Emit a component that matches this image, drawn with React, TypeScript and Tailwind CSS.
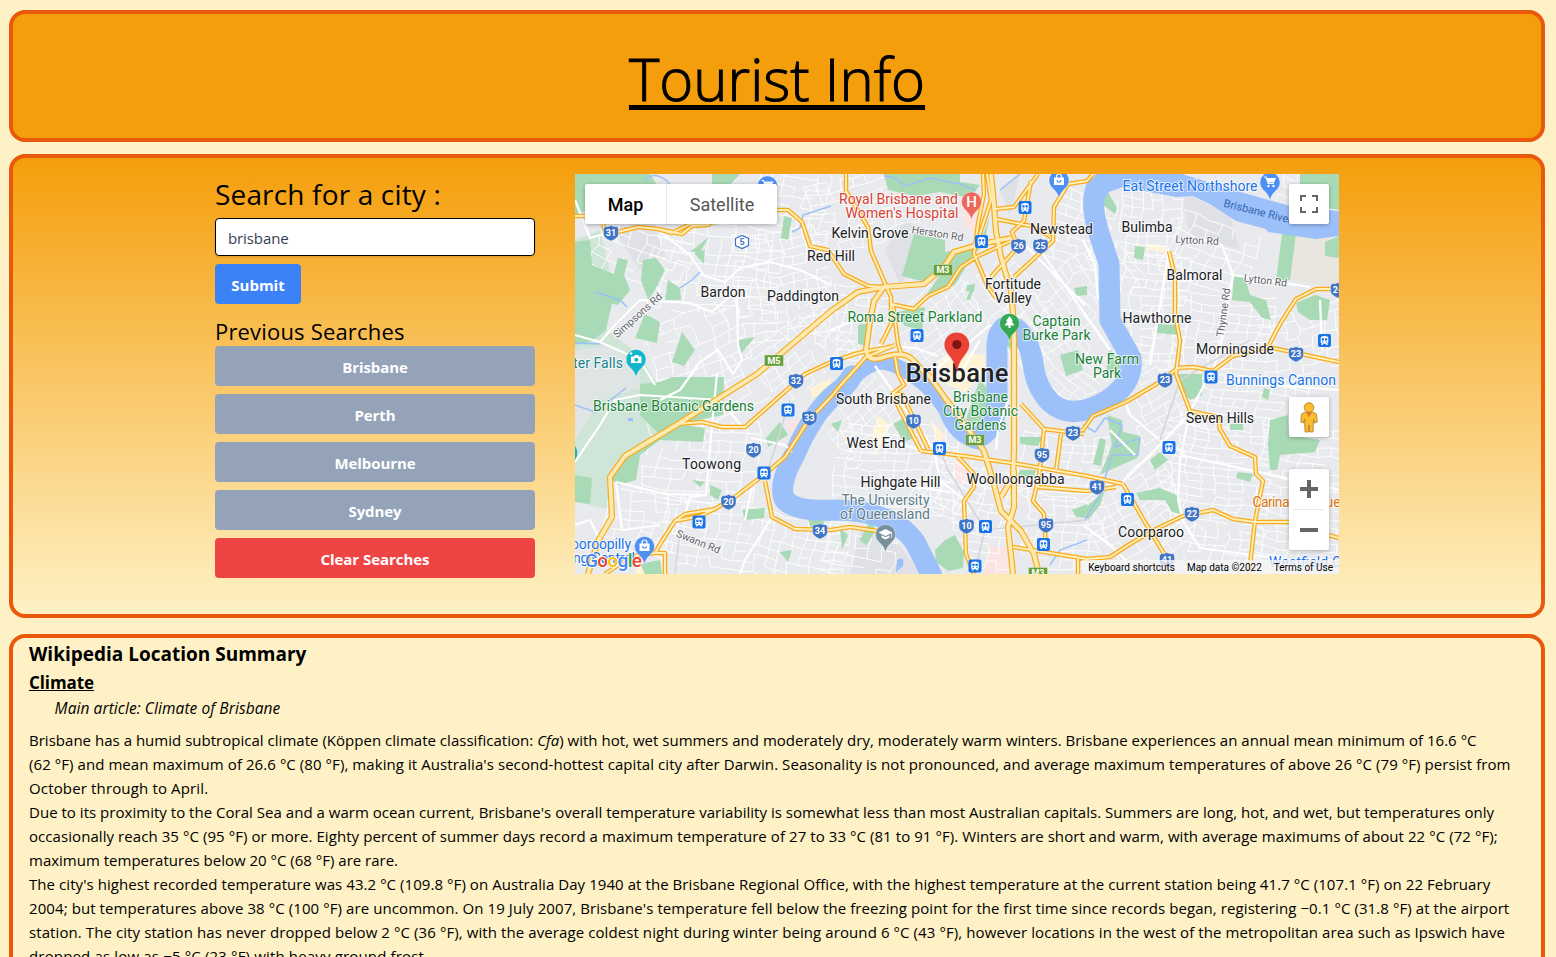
import React from "react";

const ui = "font-['Open_Sans','Noto_Sans',sans-serif]";

/* ---------- street network ---------- */

function streets(cx: number, cy: number, w: number, h: number, angle: number, dx: number, dy: number, seed: number) {
  let s = seed;
  const rnd = () => {
    s = (s * 1103515245 + 12345) % 2147483648;
    return s / 2147483648;
  };
  const nx = Math.ceil(w / dx);
  const ny = Math.ceil(h / dy);
  const a = (angle * Math.PI) / 180;
  const pts: string[][] = [];
  for (let j = 0; j <= ny; j++) {
    const row: string[] = [];
    for (let i = 0; i <= nx; i++) {
      const x = i * dx - w / 2 + (rnd() - 0.5) * dx * 0.3 + Math.sin(j * 0.8) * 2;
      const y = j * dy - h / 2 + (rnd() - 0.5) * dy * 0.3 + Math.sin(i * 0.6) * 2;
      row.push(`${(cx + x * Math.cos(a) - y * Math.sin(a)).toFixed(1)} ${(cy + x * Math.sin(a) + y * Math.cos(a)).toFixed(1)}`);
    }
    pts.push(row);
  }
  let d = "";
  for (let j = 0; j <= ny; j++)
    for (let i = 0; i <= nx; i++) {
      if (i < nx && rnd() > 0.2) d += `M${pts[j][i]}L${pts[j][i + 1]}`;
      if (j < ny && rnd() > 0.3) d += `M${pts[j][i]}L${pts[j + 1][i]}`;
    }
  return d;
}

const minorStreets = [
  streets(640, 255, 90, 50, 20, 15, 10, 4),
  streets(715, 270, 130, 90, 8, 13, 10, 7),
  streets(790, 195, 70, 60, 10, 12, 10, 17),
  streets(780, 280, 90, 100, -6, 12, 9, 21),
  streets(700, 360, 90, 100, -20, 16, 11, 12),
  streets(800, 350, 90, 60, -38, 13, 9, 8),
  streets(700, 460, 110, 80, 5, 14, 10, 5),
  streets(640, 520, 70, 60, 6, 12, 10, 44),
  streets(750, 540, 180, 60, 10, 11, 9, 15),
  streets(860, 210, 100, 70, -12, 12, 10, 16),
  streets(850, 320, 60, 70, 8, 11, 9, 18),
  streets(935, 320, 80, 60, -40, 12, 9, 19),
  streets(1010, 300, 80, 60, 48, 14, 10, 20),
  streets(1070, 300, 60, 150, 52, 15, 9, 6),
  streets(1075, 225, 50, 70, 15, 12, 9, 28),
  streets(1070, 365, 60, 60, 45, 11, 8, 29),
  streets(1150, 220, 60, 60, 4, 10, 9, 31),
  streets(1150, 310, 60, 110, 5, 11, 8, 32),
  streets(1210, 250, 80, 60, 20, 14, 11, 33),
  streets(1220, 330, 90, 70, 6, 12, 9, 34),
  streets(1300, 340, 80, 60, -12, 13, 9, 35),
  streets(1310, 190, 60, 30, 15, 14, 9, 36),
  streets(1155, 400, 60, 60, -30, 12, 9, 37),
  streets(1240, 400, 110, 50, 8, 12, 8, 38),
  streets(1210, 470, 100, 90, 8, 14, 7, 39),
  streets(1300, 470, 80, 90, 10, 13, 9, 40),
  streets(1135, 520, 90, 90, -30, 12, 9, 41),
  streets(1210, 545, 90, 50, 10, 12, 8, 42),
  streets(1295, 550, 90, 50, 8, 12, 8, 43),
  streets(1060, 465, 80, 60, 6, 12, 8, 50),
  streets(1060, 530, 70, 70, 5, 13, 9, 51),
  streets(985, 515, 60, 90, 8, 12, 8, 52),
  streets(890, 470, 110, 90, 4, 12, 9, 53),
  streets(860, 420, 70, 60, -40, 12, 9, 54),
  streets(950, 480, 50, 60, 30, 12, 9, 55),
  streets(855, 550, 60, 50, 10, 14, 10, 56),
].join("");

const collectors = [
  "M575 200L590 238L618 230M660 232L690 255L704 276L725 282L740 268L770 262L800 270L831 285",
  "M737 296L738 345L742 360L733 374L718 350L700 362L680 390L660 400",
  "M600 342L615 325L640 300L690 303L712 312L737 290M600 342L575 335M600 342L640 360L655 385",
  "M575 462L600 425L615 400L640 395L720 400L745 430",
  "M717 374L712 425L706 495L690 497L685 515M616 482L665 494L706 495",
  "M616 482L622 530L660 525M575 525L590 520L600 540",
  "M751 438L785 445L792 452M752 487L745 520M772 517L745 560L740 574",
  "M831 330L850 322L868 315M875 366L902 404L920 430L938 455M888 440L920 450",
  "M1083 240L1095 265L1098 300M1020 240L1085 305M1040 250L1110 350",
  "M1200 238L1222 245L1233 275L1310 287M1233 275L1222 340L1213 371",
  "M1169 251L1150 365M1125 400L1130 415L1160 440L1185 453M1210 374L1190 411L1180 460L1178 500L1182 516",
  "M1120 484L1165 440L1185 418M1180 455L1240 468L1339 490",
  "M1339 390L1260 384L1225 378M1083 525L1110 545L1140 574",
  "M1180 516L1200 548L1290 560M1008 400L998 430L996 450M935 455L940 480L964 500M1110 430L1135 455",
  "M900 485L950 492M930 374L960 350L990 325M960 374L980 340M1320 300L1322 350M878 345L915 348L938 356",
].join("");

const highways = [
  "M575 216H590M603 224L606 234L618 232L638 227L658 229L682 234L692 226L708 225L720 215L777 210H788L802 222L810 246L828 250L844 274L868 286L884 287",
  "M658 229L672 233L690 224L715 222",
  "M678 424L702 422L722 427H745L805 374L831 362L858 353L894 346",
  "M846 174V191L868 227L871 251L884 281L891 297V324L881 344",
  "M893 304L898 344L902 356M866 357L895 345",
  "M891 304L914 309L928 296L948 287L961 267L978 256L1011 241",
  "M983 174L984 194L978 224L974 254L988 287L996 298",
  "M991 277L1018 247L1012 232L1024 221L1031 181",
  "M987 174L991 200L978 240",
  "M996 209L1014 207L1038 174M996 219L1031 226L1051 237",
  "M1093 174L1087 181L1068 184L1054 207L1053 241L1014 277",
  "M1169 251L1175 277V314L1180 341L1176 374L1190 411L1218 417L1220 429L1230 446L1255 457L1256 474L1263 481L1255 521L1249 574",
  "M1339 289H1316L1296 299L1280 324L1268 347L1233 356L1213 371L1193 367L1178 368L1160 382L1126 402L1093 416L1083 430L1064 432",
  "M1268 347L1339 362",
  "M1021 404L1044 429L1084 434M1044 429L1039 477L1033 501L1044 514L1046 547M1061 434L1056 471",
  "M921 451L964 456L1018 464L1087 476L1123 484M1038 487L1087 491L1116 487M1038 477V487",
  "M895 357L898 374L904 385L892 394L921 451M892 394L902 394L928 449",
  "M958 457L974 474V487L964 501L966 554L974 574",
  "M1013 547L1087 559L1110 557L1130 544L1156 529L1183 516L1213 510L1233 519L1255 522H1290L1310 530L1339 538",
  "M1123 484L1146 524L1166 557L1171 574M1078 559V574",
  "M866 357L840 386L831 397L808 421L785 457L765 474L735 497L715 509L685 514L675 521L662 541L655 553L632 556L605 574",
  "M715 509L700 516L675 521M765 481L772 517L795 529L831 530L850 527L878 531M655 553H665V574",
];

const motorways = [
  "M588 574L598 541L612 517L610 477L625 456L678 424L757 374L831 311L858 292L884 287L924 284L944 267L954 252L981 244L1011 238",
  "M884 287L874 301L870 321L866 350Q868 362 881 358Q904 350 913 360L928 376",
  "M991 174L993 194L996 231L1001 257L1011 291L1014 324V451L1013 477L1001 497",
  "M1014 470V507L1008 527L1013 574",
  "M928 374L945 398L958 415L984 451L994 484L1001 511L1021 531L1034 554L1039 574",
];

const parks = [
  "M575 174H650L660 190L640 200L600 206L575 215Z",
  "M575 242L590 240L592 265L614 274L618 258L628 260L624 275L630 290L618 305L575 295Z",
  "M575 295L612 303L606 330L590 342L575 345Z",
  "M643 260L656 258L665 270L655 290L648 300L641 280Z",
  "M668 280L680 288L681 300L665 300Z",
  "M645 314L660 322L657 343L635 338Z",
  "M682 332L695 350L684 366L672 362Z",
  "M784 216L792 218L788 240L781 238Z",
  "M690 252L705 240L709 237L700 252ZM694 253L705 250L704 264Z",
  "M712 174H740L725 190L712 185Z",
  "M738 340L755 337L740 355Z",
  "M640 384L660 382L672 377L724 377L723 415L678 424L705 428L703 442L660 440L640 455L636 480L618 485L610 477L625 456L660 435L640 415Z",
  "M575 475L592 478L590 504L575 502Z",
  "M766 438L780 422L788 435L768 447Z",
  "M692 480L705 482L700 487ZM710 485L722 490L718 500L710 495ZM742 510L765 508L764 518L745 520Z",
  "M808 520L823 518L825 530L812 530Z",
  "M884 174H960L960 182L980 185L970 198L940 192L915 196L888 190Z",
  "M914 234L945 240L945 252L955 250L945 266L925 282L902 276Z",
  "M925 297L955 285L975 252L985 246L955 254L940 275Z",
  "M895 312L925 307L922 330L905 326Z",
  "M858 325L868 323L864 345L858 344Z",
  "M985 230L975 250L983 248L990 215Z",
  "M966 300L972 286L975 285L970 300Z",
  "M1003 333L1018 335L1020 345L1014 352L1006 345Z",
  "M980 380L987 388L986 410L978 426L966 420L974 395Z",
  "M831 424L842 420L838 432Z",
  "M893 424L908 416L914 438L904 442Z",
  "M935 550L945 540L955 535L964 552L963 568L948 571L936 562Z",
  "M1101 195L1108 192L1117 208L1115 214L1102 204Z",
  "M1135 246L1145 247L1143 260L1134 258Z",
  "M1282 234L1296 234L1290 280L1276 281Z",
  "M1300 174H1339V210L1320 207L1300 195Z",
  "M1325 242L1339 236V258L1325 256Z",
  "M1234 275L1245 277L1250 295L1266 300L1271 320L1262 318L1250 302L1232 300Z",
  "M1296 303L1315 295L1330 300L1327 320L1310 320L1298 312Z",
  "M1158 324L1175 325L1180 335L1156 333Z",
  "M1060 355L1078 350L1083 370L1066 376Z",
  "M1110 350L1122 362L1118 374L1106 372Z",
  "M1178 374H1202V395L1190 400L1182 392Z",
  "M1270 420L1288 415L1289 435L1320 440L1315 452L1280 455L1277 470L1270 470L1268 445Z",
  "M1100 438L1093 464L1101 466L1106 440ZM1107 415L1122 420L1123 432L1140 436L1137 458L1110 470L1100 475L1112 445Z",
  "M1160 452L1168 460L1155 470L1150 460Z",
  "M1136 493L1160 488L1178 496L1180 514L1172 512L1165 500L1140 500Z",
  "M1083 510L1105 490L1100 505L1088 520Z",
  "M1238 472L1253 474L1250 482L1236 478Z",
  "M1020 437L1042 437L1038 446L1020 444ZM1020 470L1036 470L1034 478L1018 476Z",
  "M1072 510L1087 504V518L1076 517Z",
  "M1230 424H1243V430H1230ZM1264 388L1270 390L1268 400L1262 397Z",
  "M860 540L870 520L876 530L866 545ZM840 528L848 535L842 550Z",
  "M640 564L660 560L662 574L645 574ZM780 552L792 550L788 562Z",
  "M967 285L975 284L974 292L966 291ZM1074 288L1087 286V295L1076 296Z",
];

const riverEast =
  "M1096 188C1088 212 1102 240 1109 264L1110 320L1131 358Q1134 382 1108 400Q1072 422 1050 402Q1037 388 1034 370Q1030 334 1011 326Q996 326 997 352L997 400Q995 432 976 438";
const riverCentral = "M978 442Q955 436 946 410Q934 392 922 382Q902 366 884 362Q870 362 855 376";
const riverWest = "M852 376Q845 388 835 394Q812 414 795 454Q777 486 785 500Q796 512 835 510Q892 510 915 542L932 576";

/* ---------- map labels ---------- */

type LabelProps = { x: number; y: number; w?: number; c?: string; size?: number; children: string; rot?: number; bold?: boolean };
function Label({ x, y, w, c = "#202124", size = 14, children, rot, bold }: LabelProps) {
  return (
    <text
      x={x}
      y={y}
      textAnchor="middle"
      fontSize={size}
      fontWeight={bold ? 500 : 400}
      fill={c}
      stroke="#fff"
      strokeOpacity={0.75}
      strokeWidth={2}
      strokeLinejoin="round"
      paintOrder="stroke"
      textLength={w}
      transform={rot ? `rotate(${rot} ${x} ${y})` : undefined}
    >
      {children}
    </text>
  );
}

const suburbs: [string, number, number, number][] = [
  ["Kelvin Grove", 870, 238.4, 77],
  ["Red Hill", 831, 261, 48],
  ["Newstead", 1061.5, 234, 63],
  ["Bulimba", 1147, 232, 51],
  ["Balmoral", 1194.5, 280.4, 56],
  ["Hawthorne", 1157, 323, 69],
  ["Morningside", 1235, 354.4, 78],
  ["Bardon", 723, 297, 45],
  ["Paddington", 803, 301.4, 72],
  ["Fortitude", 1013, 289, 56],
  ["Valley", 1013, 303, 37],
  ["South Brisbane", 883.5, 404.4, 95],
  ["West End", 876, 448, 59],
  ["Toowong", 711.5, 469.4, 59],
  ["Highgate Hill", 900.5, 487.4, 80],
  ["Woolloongabba", 1015.5, 484, 98],
  ["Seven Hills", 1220, 423, 68],
  ["Coorparoo", 1151, 537.4, 66],
];

const green = "#188038";
const blue = "#1a73e8";

function Shield({ x, y, n }: { x: number; y: number; n: string }) {
  return (
    <g transform={`translate(${x} ${y})`}>
      <path d="M-6-6.5Q-3.5-5.5 0-7.5Q3.5-5.5 6-6.5L7.5-4V1Q7.5 5 0 8Q-7.5 5-7.5 1V-4Z" fill="#3f74c6" stroke="#fff" strokeWidth=".4" />
      <text y="3.4" textAnchor="middle" fontSize="9" fontWeight="700" fill="#fff">{n}</text>
    </g>
  );
}

function Station({ x, y }: { x: number; y: number }) {
  return (
    <g transform={`translate(${x} ${y})`}>
      <rect x="-6.5" y="-6.5" width="13" height="13" rx="2" fill="#1a73e8" />
      <path d="M-3.8-2.5Q-3.8-4.5 0-4.5T3.8-2.5V1.8Q3.8 3 2.5 3L3.5 4.6H2L1 3.2H-1L-2 4.6H-3.5L-2.5 3Q-3.8 3-3.8 1.8Z" fill="#fff" />
      <path d="M-2.7-2.2H-.5V0H-2.7ZM.5-2.2H2.7V0H.5ZM-2.4 1H-1.2V2H-2.4ZM1.2 1H2.4V2H1.2Z" fill="#1a73e8" />
    </g>
  );
}

function Plate({ x, y, children }: { x: number; y: number; children: string }) {
  return (
    <g transform={`translate(${x} ${y})`}>
      <rect x="-9.5" y="-5.5" width="19" height="11" fill="#689f38" stroke="#fff" strokeOpacity=".5" strokeWidth=".6" />
      <text y="3.3" textAnchor="middle" fontSize="9" fontWeight="700" fill="#fff">{children}</text>
    </g>
  );
}

function Poi({ x, y, c, children }: { x: number; y: number; c: string; children?: React.ReactNode }) {
  return (
    <g transform={`translate(${x} ${y})`}>
      <path d="M0 18.500C-1 13-4 10.500-7.500 7A10 10 0 1 1 7.500 7C4 10.500 1 13 0 18.500Z" fill={c} stroke="#fff" strokeOpacity=".5" strokeWidth=".7" />
      {children}
    </g>
  );
}

const Bag = () => (
  <g>
    <path d="M-5-2.500H5V5H-5Z" fill="#fff" />
    <path d="M-2.500-2V-3.500A2.500 2.500 0 0 1 2.500-3.500V-2" fill="none" stroke="#fff" strokeWidth="1.200" />
    <path d="M-2 0A2 2 0 0 0 2 0" fill="none" stroke="#4d8ff5" strokeWidth="1.100" />
  </g>
);
const Cart = () => (
  <g>
    <path d="M-6-5H-4L-1.800 1.500H4" fill="none" stroke="#fff" strokeWidth="1.200" />
    <path d="M-3.500-4H6L4 .5H-2Z" fill="#fff" />
    <circle cx="-1.500" cy="4" r="1.200" fill="#fff" />
    <circle cx="3.500" cy="4" r="1.200" fill="#fff" />
  </g>
);

const shields: [number, number, string][] = [
  [611, 233, "31"], [796, 381, "32"], [809.5, 418, "33"], [753.5, 450, "20"], [728.5, 502, "20"], [820, 531, "34"],
  [1018.500, 246, "26"], [1040.500, 246, "25"], [913.500, 421, "10"], [1073, 433, "23"], [1042, 455, "95"], [966.500, 526, "10"],
  [1046, 525, "95"], [1165, 380, "23"], [1296, 354, "23"], [1097, 487, "41"], [1192, 514, "22"], [1167, 560, "41"], [1338, 290, "24"],
];
const stations: [number, number][] = [
  [788, 410], [764, 473], [699, 522], [1025, 207.500], [981.500, 241.500], [917, 335.500], [836.500, 363.500], [939.500, 448.500],
  [985.500, 526.500], [1043.500, 544.500], [975, 566], [1324.500, 340.500], [1211, 377], [1169, 447.500], [1127.500, 499.500],
];

function CityMap() {
  return (
    <svg className="block h-[400px] w-[764px] font-['Roboto',sans-serif]" viewBox="575 174 764 400">
      <rect x="575" y="174" width="764" height="400" fill="#e8eaed" />
      <path d="M575 240L600 230L612 280L606 330L640 355L655 380L660 430L625 456L610 477L612 510L590 505L575 500Z" fill="#cfe5d7" />
      <path d="M575 350L610 345L640 370L640 384L660 382L600 400L575 440Z" fill="#dfe4e4" />
      <path d="M620 200L650 215L665 255L640 270L620 240ZM905 220L940 235L900 285L885 250ZM1180 190L1230 215L1240 250L1190 235ZM1000 190L1020 174L1010 215ZM860 530L900 545L920 574H850Z" fill="#dfe1e6" />
      <path d="M960 205L985 205L980 235L965 228ZM954 460L972 468L966 484L954 480ZM990 546L1012 548L1008 574H984ZM786 422L800 420L798 432L790 432Z" fill="#fce4e2" />
      <path d="M938 362L950 352L985 355L985 372L965 392L945 384ZM878 415L890 425L876 455L872 440ZM930 420L945 435L938 445ZM1148 244L1166 246L1165 252L1148 250ZM640 560L660 574H635ZM810 388L831 378L830 390L812 398Z" fill="#fef3d5" />
      <path d={minorStreets} fill="none" stroke="#fff" strokeWidth="1" strokeOpacity=".9" />
      <path d="M1296 234L1339 240V288L1290 280Z" fill="#e9e6e0" />
      <path d={parks.join("")} fill="#a8dab5" />
      <g fill="none" stroke="#9cc0f9" strokeLinejoin="round" strokeLinecap="round">
        <path d={riverEast} strokeWidth="21" />
        <path d={riverCentral} strokeWidth="15" />
        <path d={riverWest} strokeWidth="21" />
      </g>
      <path d="M1087 190L1096 174H1182L1230 189L1290 206L1339 211V236L1316 239L1268 232L1266 229L1236 221L1210 204L1193 196L1176 197L1123 187L1109 192L1101 204L1083 200Z" fill="#9cc0f9" />
      <path d="M645 180Q655 170 668 182L672 190M884 176L895 178L905 186L930 178L960 184L975 190M1000 190L1020 174M595 292L620 300L627 307M575 405L595 412L626 388M575 343L600 344M680 288L692 280L700 272M792 232L800 228L803 215L831 206M1083 425L1095 432L1105 418L1122 425L1115 447L1140 438L1138 455L1112 455L1100 495L1085 520M1050 565L1060 550L1087 540" fill="none" stroke="#9cc0f9" strokeWidth="1.500" />
      <path d="M897 560Q905 555 903 566L896 572ZM628 418H633V421H628Z" fill="#9cc0f9" />
      <path d={collectors} fill="none" stroke="#fff" strokeWidth="2.200" strokeLinejoin="round" />
      <path d="M790 400L765 480M938 445L948 470L985 530L1087 520M985 530L974 574M1160 440L1180 380L1250 340M675 574L680 530" fill="none" stroke="#d3d5da" strokeWidth="1.500" />
      <g fill="none" strokeLinejoin="round">
        <path d={highways.join("")} stroke="#f9ab1f" strokeWidth="4.500" />
        <path d={motorways.join("")} stroke="#f9ab1f" strokeWidth="6.200" />
        <path d={highways.join("")} stroke="#fef0b8" strokeWidth="1.900" />
        <path d={motorways.join("")} stroke="#fdeab0" strokeWidth="3.800" />
      </g>

      {shields.map(([x, y, n], i) => <Shield key={i} x={x} y={y} n={n} />)}
      {stations.map(([x, y], i) => <Station key={i} x={x} y={y} />)}
      <path d="M735.500 238.500L742 235.500L748.500 238.500V245.500L742 248.500L735.500 245.500Z" fill="#fff" stroke="#3f74c6" strokeWidth="1.200" />
      <text x="742" y="245.300" textAnchor="middle" fontSize="9" fontWeight="700" fill="#3f74c6">5</text>
      <Plate x={943} y={270}>M3</Plate>
      <Plate x={774} y={360.500}>M5</Plate>
      <Plate x={975} y={440}>M3</Plate>
      <Plate x={1038} y={573}>M3</Plate>

      {suburbs.map(([t, x, y, w]) => <Label key={t} x={x} y={y} w={w}>{t}</Label>)}
      <Label x={898.500} y={204.400} w={119} c="#d93f35">Royal Brisbane and</Label>
      <Label x={902} y={218.400} w={113} c="#d93f35">Women's Hospital</Label>
      <Label x={915} y={322} w={135} c={green}>Roma Street Parkland</Label>
      <Label x={1056.500} y={326} w={48} c={green}>Captain</Label>
      <Label x={1056.500} y={340} w={68} c={green}>Burke Park</Label>
      <Label x={1107} y={364.400} w={64} c={green}>New Farm</Label>
      <Label x={1107} y={378.400} w={28} c={green}>Park</Label>
      <Label x={980.500} y={402.400} w={55} c={green}>Brisbane</Label>
      <Label x={980.500} y={416.400} w={75} c={green}>City Botanic</Label>
      <Label x={980.500} y={430.400} w={52} c={green}>Gardens</Label>
      <Label x={673.500} y={411.400} w={161} c={green}>Brisbane Botanic Gardens</Label>
      <Label x={598} y={368.400} w={50} c="#12838f">ter Falls</Label>
      <Label x={885.500} y={505.400} w={88} c="#607d8b">The University</Label>
      <Label x={885} y={519.400} w={90} c="#607d8b">of Queensland</Label>
      <Label x={1190} y={191.400} w={135} c={blue}>Eat Street Northshore</Label>
      <Label x={1281} y={385} w={110} c={blue}>Bunnings Cannon</Label>
      <Label x={1271} y={507} w={37} c="#d9760d">Carina</Label>
      <Label x={1333} y={507} c="#d9760d">ue</Label>
      <Label x={1309} y={567} w={80} c={blue}>Westfield Ca</Label>
      <Label x={601} y={549.400} w={60} c={blue}>ooroopilly</Label>
      <Label x={604} y={563.400} w={62} c={blue}>ng Central</Label>
      <Label x={937} y={237} size={10.500} c="#5f6368" rot={9}>Herston Rd</Label>
      <Label x={1197} y={244} size={10.500} c="#5f6368" rot={3}>Lytton Rd</Label>
      <Label x={1265} y={284} size={10.500} c="#5f6368" rot={7}>Lytton Rd</Label>
      <Label x={1227} y={313} size={10.500} c="#5f6368" rot={-82}>Thynne Rd</Label>
      <Label x={640} y={318} size={10.500} c="#5f6368" rot={-42}>Simpsons Rd</Label>
      <Label x={697} y={545} size={10.500} c="#5f6368" rot={22}>Swann Rd</Label>
      <text x="1257" y="215" textAnchor="middle" fontSize="11" fill="#3367b5" transform="rotate(14 1257 215)">Brisbane River</text>

      <Poi x={971.500} y={201.500} c="#ee675c">
        <text y="5" textAnchor="middle" fontSize="15" fontWeight="500" fill="#fff">H</text>
      </Poi>
      <Poi x={1009.500} y={323} c="#34a853">
        <path d="M0-7L3.500-2H2L5 2.500H1V5H-1V2.500H-5L-2-2H-3.500Z" fill="#fff" />
      </Poi>
      <Poi x={636} y={359} c="#12b5cb">
        <path d="M-5-2.500H-2L-1-4H2L3-2.500H5.500V4H-5Z" fill="#fff" />
        <circle cx=".3" cy=".8" r="2" fill="#12b5cb" />
        <path d="M-5-7V-4M-6.500-5.500H-3.500" stroke="#fff" />
      </Poi>
      <path d="M575 446Q578 450 577 456L575 460Z" fill="#12b5cb" />
      <Poi x={644.500} y={546} c="#4d8ff5"><Bag /></Poi>
      <Poi x={1059} y={180} c="#4d8ff5"><Bag /></Poi>
      <Poi x={1270} y={182} c="#4d8ff5"><Cart /></Poi>
      <Poi x={767.500} y={185.500} c="#4d8ff5"><Cart /></Poi>
      <Poi x={885.500} y={534} c="#78909c">
        <path d="M-7-1.500L0-5L7-1.500L0 2ZM-4 1.200L0 3.200L4 1.200V3.500L0 5.500L-4 3.500ZM5.800-1V4H6.600V-1Z" fill="#fff" />
      </Poi>

      <Label x={957} y={382.400} w={103} size={25.500} bold>Brisbane</Label>
      <path d="M956.800 373.500C955.500 362 951 358.500 947 352.500A12.400 12.400 0 1 1 966.600 352.500C962.600 358.500 958.100 362 956.800 373.500Z" fill="#ea4335" />
      <circle cx="956.800" cy="344.500" r="4.600" fill="#7f1310" />

      <text x="585" y="567" fontSize="19" textLength="57" fontWeight="500" stroke="#fff" strokeWidth="1.500" paintOrder="stroke" strokeLinejoin="round">
        <tspan fill="#4285f4">G</tspan><tspan fill="#ea4335">o</tspan><tspan fill="#fbbc04">o</tspan><tspan fill="#4285f4">g</tspan><tspan fill="#34a853">l</tspan><tspan fill="#ea4335">e</tspan>
      </text>
    </svg>
  );
}

function MapPanel() {
  const control = "absolute right-[10px] flex w-10 flex-col items-center justify-center rounded-[2px] bg-white shadow-[0_1px_4px_rgba(0,0,0,0.3)]";
  return (
    <div className="relative h-[400px] w-[764px] overflow-hidden font-['Roboto',sans-serif]">
      <CityMap />
      <div className="absolute left-[10px] top-[10px] flex h-10 rounded-[2px] bg-white text-[18px] leading-10 shadow-[0_1px_4px_rgba(0,0,0,0.3)]">
        <button className="w-[82px] border-r border-gray-200 pt-px font-medium leading-[39px] text-black">Map</button>
        <button className="w-[110px] pt-px leading-[39px] text-[#565656]">Satellite</button>
      </div>
      <button className={`${control} top-[10px] h-10`}>
        <svg className="size-[18px]" viewBox="0 0 18 18" fill="#666">
          <path d="M0 0V6H2V2H6V0ZM16 0H12V2H16V6H18V0ZM16 16H12V18H18V12H16ZM2 12H0V18H6V16H2Z" />
        </svg>
      </button>
      <button className={`${control} top-[223px] h-10`}>
        <svg className="h-[31px] w-[18px]" viewBox="0 0 18 31">
          <path d="M5 10L1.500 12L.8 20L3.500 21L4.500 17L5 30H8.300L9 23L9.700 30H13L13.500 17L14.500 21L17.200 20L16.500 12L13 10Z" fill="#fbbc2f" stroke="#a8782a" strokeWidth=".8" />
          <path d="M6 10.500H12L9 15Z" fill="#e37433" />
          <circle cx="9" cy="5.500" r="4.800" fill="#fbbc2f" stroke="#a8782a" strokeWidth=".8" />
        </svg>
      </button>
      <div className={`${control} top-[295px] h-[81px]`}>
        <button className="flex h-10 items-center">
          <svg className="size-[18px]" viewBox="0 0 18 18" fill="#666"><path d="M7 0H11V7H18V11H11V18H7V11H0V7H7Z" /></svg>
        </button>
        <div className="h-px w-[30px] bg-[#e6e6e6]" />
        <button className="flex h-10 items-center">
          <svg className="size-[18px]" viewBox="0 0 18 18" fill="#666"><path d="M0 7H18V11H0Z" /></svg>
        </button>
      </div>
      <div className="absolute bottom-0 right-0 flex h-[14px] gap-3 bg-[#f5f5f5]/80 px-[6px] text-[10px] leading-[15px] text-black">
        <span>Keyboard shortcuts</span>
        <span>Map data ©2022</span>
        <span>Terms of Use</span>
      </div>
    </div>
  );
}

/* ---------- page ---------- */

const cities = ["Brisbane", "Perth", "Melbourne", "Sydney"];

const article: { text: React.ReactNode; tracking: string }[] = [
  { text: <>Brisbane has a humid subtropical climate (Köppen climate classification: <i>Cfa</i>) with hot, wet summers and moderately dry, moderately warm winters. Brisbane experiences an annual mean minimum of 16.6 °C</>, tracking: "tracking-[0.02px]" },
  { text: "(62 °F) and mean maximum of 26.6 °C (80 °F), making it Australia's second-hottest capital city after Darwin. Seasonality is not pronounced, and average maximum temperatures of above 26 °C (79 °F) persist from", tracking: "tracking-[0.07px]" },
  { text: "October through to April.", tracking: "tracking-[0.15px]" },
  { text: "Due to its proximity to the Coral Sea and a warm ocean current, Brisbane's overall temperature variability is somewhat less than most Australian capitals. Summers are long, hot, and wet, but temperatures only", tracking: "tracking-[0.025px]" },
  { text: "occasionally reach 35 °C (95 °F) or more. Eighty percent of summer days record a maximum temperature of 27 to 33 °C (81 to 91 °F). Winters are short and warm, with average maximums of about 22 °C (72 °F);", tracking: "tracking-[0.07px]" },
  { text: "maximum temperatures below 20 °C (68 °F) are rare.", tracking: "tracking-normal" },
  { text: "The city's highest recorded temperature was 43.2 °C (109.8 °F) on Australia Day 1940 at the Brisbane Regional Office, with the highest temperature at the current station being 41.7 °C (107.1 °F) on 22 February", tracking: "tracking-[0.065px]" },
  { text: "2004; but temperatures above 38 °C (100 °F) are uncommon. On 19 July 2007, Brisbane's temperature fell below the freezing point for the first time since records began, registering −0.1 °C (31.8 °F) at the airport", tracking: "tracking-[0.085px]" },
  { text: "station. The city station has never dropped below 2 °C (36 °F), with the average coldest night during winter being around 6 °C (43 °F), however locations in the west of the metropolitan area such as Ipswich have", tracking: "tracking-[0.09px]" },
  { text: "dropped as low as −5 °C (23 °F) with heavy ground frost.", tracking: "tracking-[0.16px]" },
];

export default function App() {
  return (
    <div className={`flex h-[957px] flex-col overflow-hidden bg-[#fef1c5] pl-[9px] pr-[11px] pt-[10px] text-black ${ui}`}>
      <header className="flex h-[132px] shrink-0 items-center justify-center rounded-2xl border-4 border-[#ea580c] bg-[#f59e0b]">
        <h1 className="pt-[6px] text-[58px] font-light leading-[60px] underline decoration-[5px] underline-offset-[4px] [-webkit-text-stroke:1px_black] [text-decoration-skip-ink:none]">Tourist Info</h1>
      </header>

      <section className="mt-3 flex h-[464px] shrink-0 gap-10 rounded-2xl border-4 border-[#ea580c] bg-[linear-gradient(to_bottom,#f59e0b,#fef1c5)] pl-[202px] pt-4">
        <div className="flex w-80 flex-col">
          <h2 className="h-11 whitespace-nowrap text-[28px] leading-10 tracking-[0.16px]">Search for a city :</h2>
          <input
            className="h-[38px] shrink-0 rounded border border-black bg-white px-3 pt-0.5 text-[15px] tracking-[-0.1px] text-gray-700 shadow"
            defaultValue="brisbane"
          />
          <button className="mt-2 h-10 w-[86px] shrink-0 rounded bg-[#3b82f6] pt-0.5 text-[15px] font-bold text-white">Submit</button>
          <h3 className="mt-3 h-[30px] text-[22px] leading-[30px] tracking-[0.18px]">Previous Searches</h3>
          <div className="flex flex-col gap-2">
            {cities.map((c) => (
              <button key={c} className="h-10 rounded bg-[#94a3b8] pt-0.5 text-[15px] font-bold tracking-[-0.1px] text-white">{c}</button>
            ))}
            <button className="h-10 rounded bg-[#ef4444] pt-0.5 text-[15px] font-bold tracking-[-0.05px] text-white">Clear Searches</button>
          </div>
        </div>
        <MapPanel />
      </section>

      <section className="mt-4 h-[600px] shrink-0 whitespace-nowrap rounded-2xl border-4 border-[#ea580c] px-4 text-[15px] leading-6">
        <h2 className="h-8 text-[19px] font-bold leading-8">Wikipedia Location Summary</h2>
        <h3 className="h-6 text-[17px] font-bold leading-[25px] tracking-[-0.1px] underline">Climate</h3>
        <p className="mb-2 h-[26px] pl-[25.600px] text-[15.500px] italic leading-[28px] tracking-[0.08px]">Main article: Climate of Brisbane</p>
        {article.map(({ text, tracking }, i) => (
          <p key={i} className={tracking}>{text}</p>
        ))}
      </section>
    </div>
  );
}
